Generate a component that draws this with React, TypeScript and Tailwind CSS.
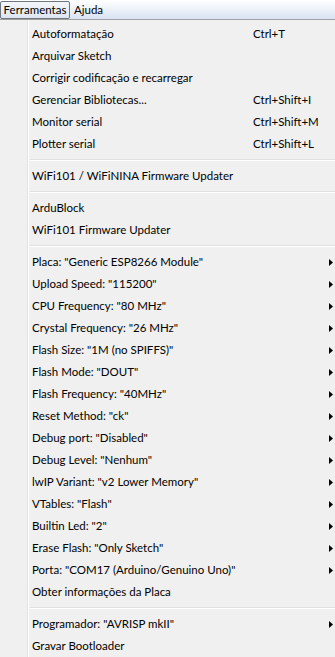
import React from 'react'

type Item =
  | { kind: 'sep' }
  | { kind: 'item'; label: string; shortcut?: string; sub?: boolean }

const items: Item[] = [
  { kind: 'item', label: 'Autoformatação', shortcut: 'Ctrl+T' },
  { kind: 'item', label: 'Arquivar Sketch' },
  { kind: 'item', label: 'Corrigir codificação e recarregar' },
  { kind: 'item', label: 'Gerenciar Bibliotecas...', shortcut: 'Ctrl+Shift+I' },
  { kind: 'item', label: 'Monitor serial', shortcut: 'Ctrl+Shift+M' },
  { kind: 'item', label: 'Plotter serial', shortcut: 'Ctrl+Shift+L' },
  { kind: 'sep' },
  { kind: 'item', label: 'WiFi101 / WiFiNINA Firmware Updater' },
  { kind: 'sep' },
  { kind: 'item', label: 'ArduBlock' },
  { kind: 'item', label: 'WiFi101 Firmware Updater' },
  { kind: 'sep' },
  { kind: 'item', label: 'Placa: "Generic ESP8266 Module"', sub: true },
  { kind: 'item', label: 'Upload Speed: "115200"', sub: true },
  { kind: 'item', label: 'CPU Frequency: "80 MHz"', sub: true },
  { kind: 'item', label: 'Crystal Frequency: "26 MHz"', sub: true },
  { kind: 'item', label: 'Flash Size: "1M (no SPIFFS)"', sub: true },
  { kind: 'item', label: 'Flash Mode: "DOUT"', sub: true },
  { kind: 'item', label: 'Flash Frequency: "40MHz"', sub: true },
  { kind: 'item', label: 'Reset Method: "ck"', sub: true },
  { kind: 'item', label: 'Debug port: "Disabled"', sub: true },
  { kind: 'item', label: 'Debug Level: "Nenhum"', sub: true },
  { kind: 'item', label: 'lwIP Variant: "v2 Lower Memory"', sub: true },
  { kind: 'item', label: 'VTables: "Flash"', sub: true },
  { kind: 'item', label: 'Builtin Led: "2"', sub: true },
  { kind: 'item', label: 'Erase Flash: "Only Sketch"', sub: true },
  { kind: 'item', label: 'Porta: "COM17 (Arduino/Genuino Uno)"', sub: true },
  { kind: 'item', label: 'Obter informações da Placa' },
  { kind: 'sep' },
  { kind: 'item', label: 'Programador: "AVRISP mkII"', sub: true },
  { kind: 'item', label: 'Gravar Bootloader' },
]

function SubArrow() {
  return (
    <svg width="4" height="7" viewBox="0 0 4 7" className="shrink-0">
      <path d="M0 0 L4 3.5 L0 7 Z" fill="#000" />
    </svg>
  )
}

export default function App() {
  return (
    <div className="w-[335px] h-[657px] overflow-hidden bg-[#f0f0f0] text-[11.5px] text-black font-['Lato',sans-serif] leading-none">
      {/* menu bar */}
      <div className="flex h-[20px] items-start border-b border-[#a0a0a0] bg-gradient-to-b from-white to-[#dae3f3]">
        <div className="mt-px flex h-[18px] w-[70px] items-center justify-center rounded-[2px] border border-[#6e7681] bg-gradient-to-b from-[#f4f6fa] to-[#dfe6f2]">
          Ferramentas
        </div>
        <div className="flex h-[19px] items-center px-[4px]">Ajuda</div>
      </div>

      {/* popup */}
      <div className="flex h-[637px]">
        <div className="w-[27px] shrink-0" />
        <div className="w-px shrink-0 bg-[#e2e3e3]" />
        <div className="w-px shrink-0 bg-white" />
        <div className="flex-1 pt-[3px]">
          {items.map((it, i) =>
            it.kind === 'sep' ? (
              <div key={i} className="flex h-[10px] flex-col justify-center pl-px">
                <div className="h-px bg-[#e0e0e0]" />
                <div className="h-px bg-white" />
              </div>
            ) : (
              <div key={i} className="flex h-[22px] items-center pl-[3px] pr-[2px]">
                <span className="flex-1 whitespace-nowrap">{it.label}</span>
                {it.shortcut && <span className="w-[80px] whitespace-nowrap">{it.shortcut}</span>}
                {it.sub && <SubArrow />}
              </div>
            )
          )}
        </div>
      </div>
    </div>
  )
}
